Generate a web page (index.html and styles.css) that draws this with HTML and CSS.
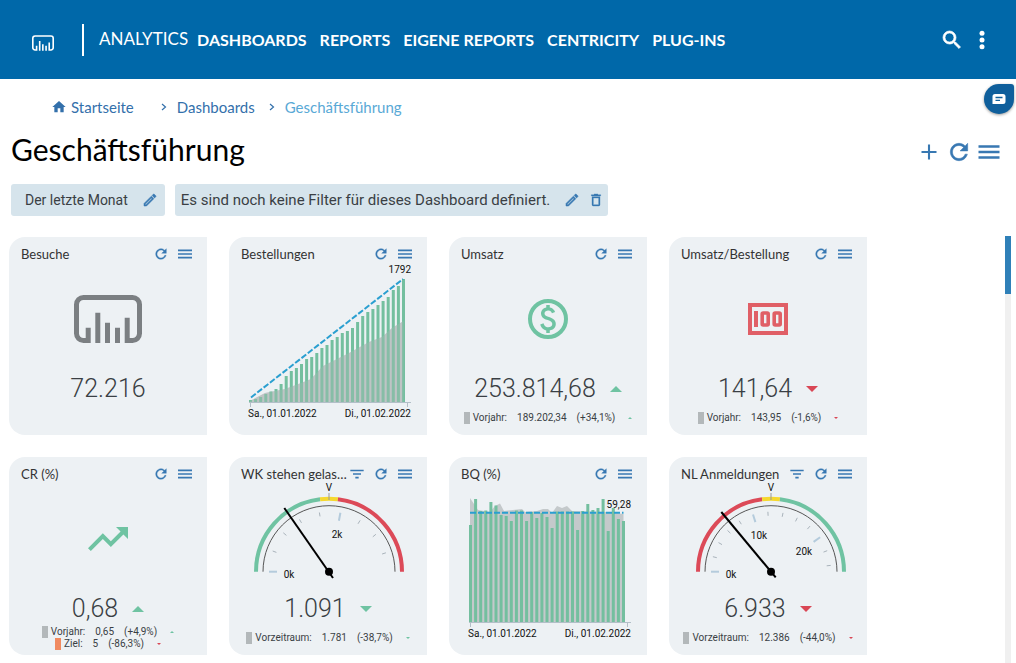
FILE: index.html
```html
<!DOCTYPE html>
<html lang="de">
<head>
<meta charset="utf-8">
<meta name="viewport" content="width=device-width, initial-scale=1">
<title>Geschäftsführung</title>
<link rel="stylesheet" href="styles.css">
</head>
<body>
<svg class="symbols" aria-hidden="true">
  <symbol id="i-logo" viewBox="0 0 68 48"><path fill="none" stroke="currentColor" stroke-width="5" d="M14.2 32.7V45.5H9.5a7 7 0 0 1-7-7v-29a7 7 0 0 1 7-7h49a7 7 0 0 1 7 7v29a7 7 0 0 1-7 7h-5.3V22.7M23.8 48V17.7M33.5 48V27.7M43.5 48V32.7"/></symbol>
  <symbol id="i-refresh" viewBox="0 0 24 24"><path stroke="currentColor" stroke-width=".5" d="M17.65 6.35C16.2 4.9 14.21 4 12 4c-4.42 0-7.99 3.58-7.99 8s3.57 8 7.99 8c3.73 0 6.84-2.55 7.73-6h-2.08c-.82 2.33-3.04 4-5.65 4-3.31 0-6-2.69-6-6s2.69-6 6-6c1.66 0 3.14.69 4.22 1.78L13 11h7V4l-2.35 2.35z"/></symbol>
  <symbol id="i-menu" viewBox="0 0 24 24"><path d="M1.500 5.200h21v2.500h-21zM1.500 10.750h21v2.500h-21zM1.500 16.300h21v2.500h-21z"/></symbol>
  <symbol id="i-filter" viewBox="0 0 24 24"><path d="M2 5.500h20v2.500H2zM6 10.800h12v2.500H6zM9.500 16.100h5v2.500h-5z"/></symbol>
  <symbol id="i-plus" viewBox="0 0 24 24"><path d="M10.600 2h2.800v8.600H22v2.800h-8.600V22h-2.800v-8.600H2v-2.800h8.600z"/></symbol>
  <symbol id="i-edit" viewBox="0 0 24 24"><path stroke="currentColor" stroke-width=".8" d="m14.060 9.020.92.92L5.920 19H5v-.92l9.060-9.060M17.660 3c-.25 0-.51.1-.7.29l-1.830 1.830 3.750 3.750 1.830-1.830c.39-.39.39-1.020 0-1.410l-2.340-2.340c-.2-.2-.45-.29-.71-.29zm-3.600 3.190L3 17.250V21h3.750L17.810 9.940l-3.750-3.750z"/></symbol>
  <symbol id="i-trash" viewBox="0 0 24 24"><path stroke="currentColor" stroke-width=".5" d="M16 9v10H8V9h8m-1.500-6h-5l-1 1H5v2h14V4h-3.500l-1-1zM18 7H6v12c0 1.100.9 2 2 2h8c1.100 0 2-.9 2-2V7z"/></symbol>
  <symbol id="i-home" viewBox="0 0 24 24"><path d="M10 20v-6h4v6h5v-8h3L12 3 2 12h3v8z"/></symbol>
  <symbol id="i-search" viewBox="0 0 24 24"><path stroke="currentColor" stroke-width=".7" d="M15.500 14h-.79l-.28-.27A6.471 6.471 0 0 0 16 9.500 6.500 6.500 0 1 0 9.500 16c1.610 0 3.090-.59 4.230-1.570l.27.28v.79l5 4.990L20.490 19l-4.990-5zm-6 0C7.010 14 5 11.990 5 9.500S7.010 5 9.500 5 14 7.010 14 9.500 11.990 14 9.500 14z"/></symbol>
  <symbol id="i-more" viewBox="0 0 24 24"><circle cx="12" cy="5.200" r="2.500"/><circle cx="12" cy="12" r="2.500"/><circle cx="12" cy="18.800" r="2.500"/></symbol>
  <symbol id="i-chevron" viewBox="0 0 6 8"><path fill="none" stroke="currentColor" stroke-width="1.200" d="M1 1l3.500 3L1 7"/></symbol>
  <symbol id="i-money" viewBox="0 0 24 24"><circle cx="12" cy="12" r="9" fill="none" stroke="currentColor" stroke-width="2"/><path d="M12.880 17.760V19h-1.750v-1.290c-.74-.18-2.390-.77-3.020-2.960l1.650-.67c.06.22.58 2.090 2.400 2.090.93 0 1.980-.48 1.980-1.610 0-.96-.7-1.460-2.280-2.030-1.100-.39-3.350-1.030-3.350-3.310 0-.1.010-2.400 2.620-2.960V5h1.750v1.240c1.840.32 2.510 1.790 2.660 2.230l-1.580.67c-.11-.35-.59-1.340-1.900-1.340-.7 0-1.810.37-1.810 1.390 0 .95.86 1.310 2.640 1.900 2.400.83 3.010 2.050 3.010 3.450 0 2.630-2.500 3.130-3.020 3.220z"/></symbol>
  <symbol id="i-note" viewBox="0 0 40 32"><g fill="none" stroke="currentColor"><rect x="2" y="2" width="36" height="28" stroke-width="4"/><rect x="14.200" y="10" width="6" height="12" rx="1" stroke-width="3.600"/><rect x="26.200" y="10" width="6" height="12" rx="1" stroke-width="3.600"/></g><path d="M6 8h4v16H6z"/></symbol>
  <symbol id="i-trend" viewBox="0 0 24 24"><path d="m16 6 2.290 2.290-4.880 4.880-4-4L2 16.590 3.410 18l6-6 4 4 6.300-6.290L22 12V6z"/></symbol>
  <symbol id="i-up" viewBox="0 0 12 6"><path d="M6 0l6 6H0z"/></symbol>
  <symbol id="i-down" viewBox="0 0 12 6"><path d="M0 0h12L6 6z"/></symbol>
</svg>

<header class="topbar">
  <a class="logo" href="#" aria-label="Startseite"><svg class="icon-logo"><use href="#i-logo"/></svg></a>
  <nav class="mainnav" aria-label="Hauptnavigation">
    <a class="brand" href="#">ANALYTICS</a>
    <a href="#">DASHBOARDS</a>
    <a href="#">REPORTS</a>
    <a href="#">EIGENE REPORTS</a>
    <a href="#">CENTRICITY</a>
    <a href="#">PLUG-INS</a>
  </nav>
  <div class="tools">
    <button aria-label="Suche"><svg class="icon-l"><use href="#i-search"/></svg></button>
    <button aria-label="Mehr"><svg class="icon-l"><use href="#i-more"/></svg></button>
  </div>
</header>

<button class="feedback" aria-label="Nachricht"><svg viewBox="0 0 14 12" class="icon-chat"><path fill="#fff" d="M3 1h8a2.500 2.500 0 0 1 2.500 2.500v5A2.500 2.500 0 0 1 11 11H.5V3.500A2.500 2.500 0 0 1 3 1z"/><path stroke="#0f5f9c" stroke-width="1.400" d="M3.500 4.500h7M3.500 7.400h4.500"/></svg></button>

<main>
  <nav class="crumbs" aria-label="Brotkrumen">
    <a class="home" href="#"><svg class="icon-s"><use href="#i-home"/></svg>Startseite</a>
    <svg class="chevron"><use href="#i-chevron"/></svg>
    <a href="#">Dashboards</a>
    <svg class="chevron"><use href="#i-chevron"/></svg>
    <a class="current" href="#" aria-current="page">Geschäftsführung</a>
  </nav>

  <div class="titlebar">
    <h1>Geschäftsführung</h1>
    <div class="actions">
      <button aria-label="Hinzufügen"><svg class="icon-m"><use href="#i-plus"/></svg></button>
      <button aria-label="Aktualisieren"><svg class="icon-xl"><use href="#i-refresh"/></svg></button>
      <button aria-label="Menü"><svg class="icon-l"><use href="#i-menu"/></svg></button>
    </div>
  </div>

  <div class="filters">
    <div class="chip period"><span>Der letzte Monat</span><button aria-label="Zeitraum bearbeiten"><svg class="icon-s"><use href="#i-edit"/></svg></button></div>
    <div class="chip wide"><span>Es sind noch keine Filter für dieses Dashboard definiert.</span><button aria-label="Filter bearbeiten"><svg class="icon-s"><use href="#i-edit"/></svg></button><button aria-label="Filter löschen"><svg class="icon-s"><use href="#i-trash"/></svg></button></div>
  </div>

  <div class="board">
    <div class="grid">
      <section class="card">
        <header><h2>Besuche</h2><button aria-label="Aktualisieren"><svg class="icon-s"><use href="#i-refresh"/></svg></button><button aria-label="Menü"><svg class="icon-s"><use href="#i-menu"/></svg></button></header>
        <div class="symbol grey"><svg class="big-logo"><use href="#i-logo"/></svg></div>
        <p class="value">72.216</p>
        <div class="compare"></div>
      </section>

      <section class="card">
        <header><h2>Bestellungen</h2><button aria-label="Aktualisieren"><svg class="icon-s"><use href="#i-refresh"/></svg></button><button aria-label="Menü"><svg class="icon-s"><use href="#i-menu"/></svg></button></header>
        <svg class="chart" id="orders" viewBox="0 26 198 172" role="img" aria-label="Bestellungen"></svg>
      </section>

      <section class="card">
        <header><h2>Umsatz</h2><button aria-label="Aktualisieren"><svg class="icon-s"><use href="#i-refresh"/></svg></button><button aria-label="Menü"><svg class="icon-s"><use href="#i-menu"/></svg></button></header>
        <div class="symbol green"><svg class="big"><use href="#i-money"/></svg></div>
        <p class="value">253.814,68 <svg class="arrow green"><use href="#i-up"/></svg></p>
        <div class="compare"><p><i class="mark"></i><span class="label">Vorjahr:</span><span>189.202,34</span><span>(+34,1%)</span><svg class="tiny green"><use href="#i-up"/></svg></p></div>
      </section>

      <section class="card">
        <header><h2>Umsatz/Bestellung</h2><button aria-label="Aktualisieren"><svg class="icon-s"><use href="#i-refresh"/></svg></button><button aria-label="Menü"><svg class="icon-s"><use href="#i-menu"/></svg></button></header>
        <div class="symbol rose"><svg class="note"><use href="#i-note"/></svg></div>
        <p class="value">141,64 <svg class="arrow red"><use href="#i-down"/></svg></p>
        <div class="compare"><p><i class="mark"></i><span class="label">Vorjahr:</span><span>143,95</span><span>(-1,6%)</span><svg class="tiny red"><use href="#i-down"/></svg></p></div>
      </section>

      <section class="card">
        <header><h2>CR (%)</h2><button aria-label="Aktualisieren"><svg class="icon-s"><use href="#i-refresh"/></svg></button><button aria-label="Menü"><svg class="icon-s"><use href="#i-menu"/></svg></button></header>
        <div class="symbol green"><svg class="big"><use href="#i-trend"/></svg></div>
        <p class="value">0,68 <svg class="arrow green"><use href="#i-up"/></svg></p>
        <div class="compare">
          <p><i class="mark"></i><span class="label">Vorjahr:</span><span>0,65</span><span>(+4,9%)</span><svg class="tiny green"><use href="#i-up"/></svg></p>
          <p><i class="mark goal"></i><span class="label">Ziel:</span><span>5</span><span>(-86,3%)</span><svg class="tiny red"><use href="#i-down"/></svg></p>
        </div>
      </section>

      <section class="card">
        <header><h2>WK stehen gelas…</h2><button aria-label="Filter"><svg class="icon-s"><use href="#i-filter"/></svg></button><button aria-label="Aktualisieren"><svg class="icon-s"><use href="#i-refresh"/></svg></button><button aria-label="Menü"><svg class="icon-s"><use href="#i-menu"/></svg></button></header>
        <svg class="gauge" id="carts" viewBox="0 26 198 112" role="img" aria-label="Warenkörbe"></svg>
        <p class="value">1.091 <svg class="arrow green"><use href="#i-down"/></svg></p>
        <div class="compare"><p><i class="mark"></i><span class="label">Vorzeitraum:</span><span>1.781</span><span>(-38,7%)</span><svg class="tiny green"><use href="#i-down"/></svg></p></div>
      </section>

      <section class="card">
        <header><h2>BQ (%)</h2><button aria-label="Aktualisieren"><svg class="icon-s"><use href="#i-refresh"/></svg></button><button aria-label="Menü"><svg class="icon-s"><use href="#i-menu"/></svg></button></header>
        <svg class="chart" id="bounce" viewBox="0 26 198 172" role="img" aria-label="BQ"></svg>
      </section>

      <section class="card">
        <header><h2>NL Anmeldungen</h2><button aria-label="Filter"><svg class="icon-s"><use href="#i-filter"/></svg></button><button aria-label="Aktualisieren"><svg class="icon-s"><use href="#i-refresh"/></svg></button><button aria-label="Menü"><svg class="icon-s"><use href="#i-menu"/></svg></button></header>
        <svg class="gauge" id="signups" viewBox="0 26 198 112" role="img" aria-label="NL Anmeldungen"></svg>
        <p class="value">6.933 <svg class="arrow red"><use href="#i-down"/></svg></p>
        <div class="compare"><p><i class="mark"></i><span class="label">Vorzeitraum:</span><span>12.386</span><span>(-44,0%)</span><svg class="tiny red"><use href="#i-down"/></svg></p></div>
      </section>
    </div>
    <div class="scrollbar"><div class="thumb"></div></div>
  </div>
</main>
<script src="charts.js"></script>
</body>
</html>
```
FILE: styles.css
```css
* { box-sizing: border-box; }
body { margin: 0; background: #fff; color: #3a3f44; font-family: Roboto, "Liberation Sans", sans-serif; position: relative; display: flex; flex-direction: column; overflow: hidden; height: 100vh; }
h1, h2, p { margin: 0; font-weight: 400; }
a { color: inherit; text-decoration: none; }
button { border: 0; padding: 0; background: none; color: inherit; display: flex; flex: none; align-items: center; justify-content: center; cursor: pointer; }
svg { fill: currentColor; display: block; flex: none; }
.symbols { position: absolute; width: 0; height: 0; }

.icon-s { width: 16px; height: 16px; }
.icon-m { width: 18px; height: 18px; }
.icon-l { width: 24px; height: 24px; }
.icon-xl { width: 26px; height: 26px; }

.topbar { flex: none; height: 79px; background: #0068a9; color: #fff; display: flex; align-items: center; padding: 0 19px 0 32px; }
.logo { width: 50px; padding-top: 6px; }
.icon-logo { width: 22px; height: 16px; }
.mainnav { flex: 1; display: flex; align-items: center; gap: 13px; height: 32px; border-left: 2px solid #fff; padding-left: 15px; font: 700 16px/20px Lato, sans-serif; white-space: nowrap; }
.mainnav .brand { margin-right: -4px; padding-bottom: 2px; font-weight: 400; font-size: 17px; }
.tools, .actions { display: flex; align-items: center; }
.tools button, .actions button { width: 30px; }

.feedback { position: absolute; right: 2px; top: 84px; width: 30px; height: 30px; border-radius: 15px 3px 15px 15px; background: #0f5f9c; box-shadow: 0 1px 3px rgba(0,0,0,.4); }
.icon-chat { width: 14px; height: 12px; }

main { flex: 1; min-height: 0; display: flex; flex-direction: column; }
.crumbs { display: flex; align-items: center; padding: 18px 51px 0; font: 400 15px/20px Lato, sans-serif; color: #3370ab; gap: 10px; }
.crumbs .home { display: flex; align-items: center; gap: 4px; margin-right: 13px; }
.crumbs .current { color: #59a9d6; }
.chevron { width: 6px; height: 8px; margin-left: 4px; }
.titlebar { display: flex; align-items: flex-start; justify-content: space-between; padding: 12px 12px 0 11px; }
h1 { font: 400 30px/40px Lato, sans-serif; color: #000; }
.actions { padding-top: 10px; color: #3878b2; }
.filters { display: flex; gap: 10px; padding: 15px 11px 0; }
.chip { height: 32px; display: flex; align-items: center; background: #d6e4ec; border-radius: 3px; font-size: 14px; white-space: nowrap; }
.chip button { color: #3878b2; }
.period { gap: 14px; padding: 0 7px 0 14px; }
.wide { gap: 8px; padding: 0 4px 0 6px; font-size: 15px; }
.wide span { margin-right: 6px; }

.board { flex: 1; min-height: 0; display: flex; justify-content: space-between; padding: 20px 5px 0 9px; }
.grid { flex: 1; display: grid; grid-template-columns: repeat(auto-fill, 198px); gap: 22px; align-content: start; padding-top: 1px; }
.scrollbar { width: 6px; background: #f0f0f0; }
.thumb { height: 58px; background: #2f80b8; }

.card { height: 198px; background: #edf1f4; border-radius: 16px 0 0 16px; display: flex; flex-direction: column; padding-top: 8px; overflow: hidden; }
.card header { height: 18px; display: flex; align-items: center; padding: 0 10px 0 12px; color: #3878b2; }
.card h2 { flex: 1; min-width: 0; font: 400 13px/18px Lato, sans-serif; color: #333; white-space: nowrap; }
.card header button { width: 24px; }
.symbol { height: 112px; display: flex; align-items: center; justify-content: center; }
.big { width: 48px; height: 48px; }
.big-logo { width: 68px; height: 48px; }
.note { width: 40px; height: 32px; }
.value { height: 28px; display: flex; align-items: center; justify-content: center; gap: 14px; font-size: 25px; line-height: 28px; font-weight: 300; }
.arrow { width: 12px; height: 6px; }
.tiny { width: 4px; height: 2px; margin-left: 3px; }
.compare { height: 30px; display: flex; flex-direction: column; justify-content: center; }
.compare p { display: flex; align-items: center; justify-content: center; gap: 10px; font-size: 10px; line-height: 12px; }
.mark { width: 6px; height: 12px; background: #b3b8ba; margin-right: -7px; }
.goal { background: #f08a60; }
.grey { color: #7b7f82; }
.green { color: #6fc3a2; }
.red { color: #d94755; }
.rose { color: #e05f66; }

.chart, .gauge { width: 100%; height: auto; font: 10px Roboto, sans-serif; }
.chart text, .gauge text { fill: #111; }
.end { text-anchor: end; }
.mid { text-anchor: middle; }
.bar { fill: #74bf9f; }
.area { fill: #c4c9cb; }
.overlay { fill: #b4b9bb; fill-opacity: .3; }
.trend { stroke: #2a9fd0; stroke-width: 2; stroke-dasharray: 6 2; fill: none; }
.axis { stroke: #b3bfc8; fill: none; }
.arc { fill: none; stroke-width: 4; }
.arc-green { stroke: #6fc3a2; }
.arc-yellow { stroke: #f5d82f; }
.arc-red { stroke: #dc4a58; }
.dial { fill: none; stroke: #555; }
.tick { stroke: #a9b3bb; }
.major { stroke: #b4cbdc; stroke-width: 2; }
.limit { stroke: #999; stroke-width: 1; }
.needle { stroke: #000; stroke-width: 2; }
.hub { fill: #000; }
```
FILE: charts.js
```js
// Bar charts: y values are positions inside the 198-unit card, base line at 165.
function barChart(id, tops, area, trend, areaOver, label, labelY) {
  const x0 = 21.5, step = 5.1, base = 165;
  const bars = tops.map((t, i) =>
    `<rect class="bar" x="${(x0 + i * step - 1.5).toFixed(1)}" y="${t}" width="3" height="${(base - t).toFixed(1)}"/>`).join('');
  const points = area.map(p => p.join(',')).join(' ');
  const shape = c => `<polygon class="${c}" points="21,${base} ${points} 174.5,${base}"/>`;
  document.getElementById(id).innerHTML =
    shape('area') + bars + (areaOver ? shape('overlay') : '') +
    `<path class="trend" d="${trend}"/>` +
    `<path class="axis" d="M20 165.5H182M21.500 165v5M178.500 165v5"/>` +
    `<text x="19" y="180">Sa., 01.01.2022</text>` +
    `<text class="end" x="182" y="180">Di., 01.02.2022</text>` +
    `<text class="end" x="182" y="${labelY}">${label}</text>`;
}

barChart('orders',
  [163, 162, 160, 157, 154.500, 152, 147, 139, 134, 131, 127, 122, 120, 116, 111, 108, 103, 100, 96, 94, 91, 85, 79, 75, 72, 68, 64, 60, 53, 49, 42],
  [[21, 164], [36, 156], [56, 152], [72, 146], [82, 142], [94, 129], [108, 122], [120, 116], [140, 105], [153, 100], [163, 91], [174.500, 84]],
  'M22 160.500L174 42', true, '1792', 36);

barChart('bounce',
  [68, 42, 54, 53.500, 45, 48.500, 58, 59, 64, 53.500, 53.500, 64, 55, 61, 56, 60, 71, 54.500, 54.500, 54.500, 54.500, 73, 54, 47, 53, 51, 42, 74, 51, 62, 64],
  [[21, 41], [29, 53], [41, 55], [46, 49], [51, 46.500], [55, 54], [73, 52], [76, 55], [88, 54], [94, 52], [99, 52], [103, 56], [108, 49], [113, 51], [118, 49], [123, 54], [158, 55], [174.500, 57]],
  'M21 55.700H174.500', false, '59,28', 51);

// Half-circle gauges; angles are measured in degrees from the right.
function gauge(id, cx, colours, needle, ticks, majorEvery, step, labels) {
  const cy = 114.7;
  const at = (r, deg) => {
    const a = deg * Math.PI / 180;
    return (cx + r * Math.cos(a)).toFixed(1) + ' ' + (cy - r * Math.sin(a)).toFixed(1);
  };
  const arc = (r, from, to, cls) => `<path class="${cls}" d="M${at(r, from)}A${r} ${r} 0 0 1 ${at(r, to)}"/>`;
  let out = arc(73, 180, 97, 'arc arc-' + colours[0]) + arc(73, 97, 83, 'arc arc-yellow') + arc(73, 83, 0, 'arc arc-' + colours[1]) + arc(66, 180, 0, 'dial');
  for (let i = 0; i < ticks; i++) {
    const major = i % majorEvery === 0, deg = 180 - i * step;
    out += `<path class="tick ${major ? 'major' : ''}" d="M${at(60, deg)}L${at(major ? 52 : 56, deg)}"/>`;
  }
  out += `<path class="limit" d="M${cx} 36v7"/><text class="mid" x="${cx}" y="34">V</text>`;
  out += labels.map(l => `<text class="mid" x="${l[1]}" y="${l[2]}">${l[0]}</text>`).join('');
  out += `<path class="needle" d="M${cx + needle[0]} ${cy + needle[1]}L${cx + needle[2]} ${cy + needle[3]}"/><circle class="hub" cx="${cx}" cy="${cy}" r="4"/>`;
  document.getElementById(id).innerHTML = out;
}

gauge('carts', 100, ['green', 'red'], [-44.700, -63.700, 4, 6.300], 9, 5, 20.200, [['0k', 60, 121], ['2k', 108, 81]]);
gauge('signups', 102, ['red', 'green'], [-49.700, -59.700, 4.700, 5.700], 13, 5, 14.500, [['0k', 62, 121], ['10k', 90, 82], ['20k', 135, 98]]);
```
